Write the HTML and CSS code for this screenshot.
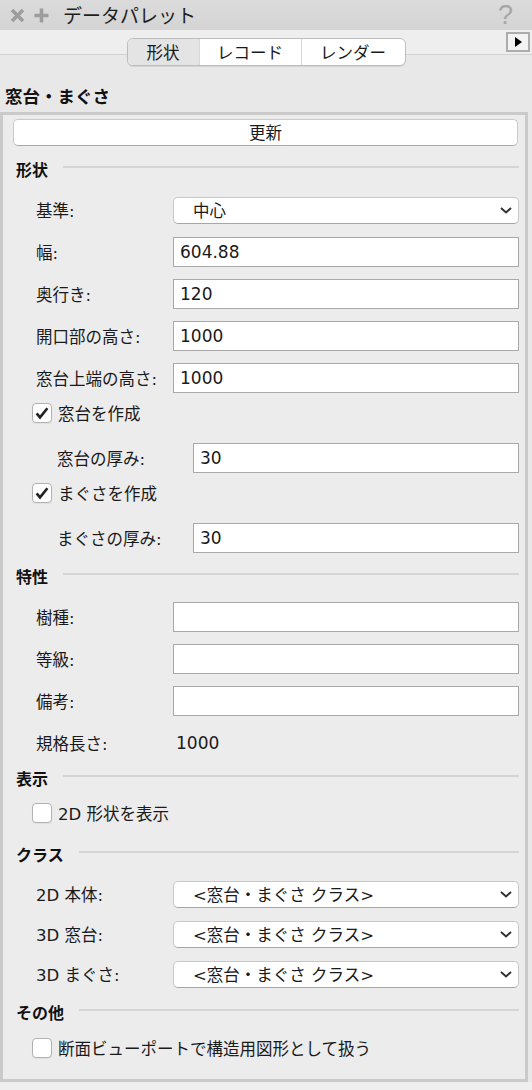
FILE: index.html
```html
<!DOCTYPE html>
<html lang="ja">
<head>
<meta charset="utf-8">
<title>データパレット</title>
<link rel="stylesheet" href="styles.css">
</head>
<body>
<div class="titlebar">
  <svg class="tb-icon" width="15" height="15" viewBox="0 0 15 15"><path d="M2 2L13 13M13 2L2 13"/></svg>
  <svg class="tb-icon tb-plus" width="15" height="15" viewBox="0 0 15 15"><path d="M7.5 0.5V14.5M0.5 7.5H14.5"/></svg>
  <span class="title">データパレット</span>
  <span class="help">?</span>
</div>

<div class="tabstrip">
  <div class="seg">
    <span class="seg-item active w1">形状</span>
    <span class="seg-item w2">レコード</span>
    <span class="seg-item w3">レンダー</span>
  </div>
  <div class="menu-btn"><svg width="7" height="10" viewBox="0 0 7 10"><path d="M0 0L7 5L0 10Z"/></svg></div>
</div>

<div class="main">
  <div class="objname">窓台・まぐさ</div>
  <div class="panel">
    <div class="update">更新</div>

    <div class="hdr first"><span>形状</span><i></i></div>
    <div class="row"><span class="lbl">基準:</span><div class="select"><span>中心</span><svg class="chev" width="12" height="7" viewBox="0 0 12 7"><path d="M1 1L6 5.5L11 1"/></svg></div></div>
    <div class="row"><span class="lbl">幅:</span><input class="field" type="text" value="604.88" readonly></div>
    <div class="row"><span class="lbl">奥行き:</span><input class="field" type="text" value="120" readonly></div>
    <div class="row"><span class="lbl">開口部の高さ:</span><input class="field" type="text" value="1000" readonly></div>
    <div class="row"><span class="lbl">窓台上端の高さ:</span><input class="field" type="text" value="1000" readonly></div>
    <div class="cb"><span class="box"><svg width="18" height="18" viewBox="0 0 18 18"><path d="M3.6 9.4L7 13.4L14.4 4.2"/></svg></span><span>窓台を作成</span></div>
    <div class="row ind gap"><span class="lbl">窓台の厚み:</span><input class="field" type="text" value="30" readonly></div>
    <div class="cb"><span class="box"><svg width="18" height="18" viewBox="0 0 18 18"><path d="M3.6 9.4L7 13.4L14.4 4.2"/></svg></span><span>まぐさを作成</span></div>
    <div class="row ind gap"><span class="lbl">まぐさの厚み:</span><input class="field" type="text" value="30" readonly></div>

    <div class="hdr sec2"><span>特性</span><i></i></div>
    <div class="row"><span class="lbl">樹種:</span><input class="field" type="text" value="" readonly></div>
    <div class="row"><span class="lbl">等級:</span><input class="field" type="text" value="" readonly></div>
    <div class="row"><span class="lbl">備考:</span><input class="field" type="text" value="" readonly></div>
    <div class="row"><span class="lbl">規格長さ:</span><span class="value">1000</span></div>

    <div class="hdr sec3"><span>表示</span><i></i></div>
    <div class="cb cb3"><span class="box"></span><span>2D 形状を表示</span></div>

    <div class="hdr sec4"><span>クラス</span><i></i></div>
    <div class="row short"><span class="lbl">2D 本体:</span><div class="select"><span>&lt;窓台・まぐさ クラス&gt;</span><svg class="chev" width="12" height="7" viewBox="0 0 12 7"><path d="M1 1L6 5.5L11 1"/></svg></div></div>
    <div class="row short"><span class="lbl">3D 窓台:</span><div class="select"><span>&lt;窓台・まぐさ クラス&gt;</span><svg class="chev" width="12" height="7" viewBox="0 0 12 7"><path d="M1 1L6 5.5L11 1"/></svg></div></div>
    <div class="row short"><span class="lbl">3D まぐさ:</span><div class="select"><span>&lt;窓台・まぐさ クラス&gt;</span><svg class="chev" width="12" height="7" viewBox="0 0 12 7"><path d="M1 1L6 5.5L11 1"/></svg></div></div>

    <div class="hdr sec5"><span>その他</span><i></i></div>
    <div class="cb cb4"><span class="box"></span><span>断面ビューポートで構造用図形として扱う</span></div>
  </div>
</div>
</body>
</html>
```

FILE: styles.css
```css
* { box-sizing: border-box; }

html, body { margin: 0; padding: 0; }

body {
  width: 532px;
  height: 1090px;
  overflow: hidden;
  background: #efefef;
  font-family: "DejaVu Sans", "Noto Sans CJK JP", sans-serif;
  font-size: 16.5px;
  color: #1a1a1a;
}

/* title bar */
.titlebar {
  height: 30px;
  display: flex;
  align-items: center;
  padding-left: 10px;
  background: linear-gradient(#dbdbdb, #d4d4d4);
}
.tb-icon { fill: none; stroke: #9d9d9d; stroke-width: 3.6; }
.tb-plus { margin-left: 9px; }
.title {
  margin-left: 14px;
  font-family: "Noto Sans CJK JP", sans-serif;
  font-size: 19px;
  line-height: 30px;
  color: #1e1e1e;
}
.help {
  margin-left: auto;
  margin-right: 19px;
  font-family: "Liberation Sans", sans-serif;
  font-size: 27px;
  line-height: 30px;
  color: #a6a6a6;
}

/* tab strip */
.tabstrip {
  height: 44px;
  display: grid;
  grid-template-columns: 1fr auto 1fr;
  align-items: start;
  background: linear-gradient(#eeeeee 0 24px, #d3d3d3 24px 25px, #e8e8e8 25px);
}
.seg {
  grid-column: 2;
  margin-top: 8px;
  height: 28px;
  display: flex;
  background: #fff;
  border: 1px solid #bdbdbd;
  border-radius: 6px;
  overflow: hidden;
  box-shadow: 0 1px 0 rgba(0, 0, 0, 0.08);
}
.seg-item {
  display: flex;
  align-items: center;
  justify-content: center;
  font-family: "Noto Sans CJK JP", sans-serif;
  font-size: 16.5px;
  color: #1a1a1a;
}
.seg-item + .seg-item { border-left: 1px solid #d8d8d8; }
.seg-item.active { background: #e4e4e4; }
.w1 { width: 71px; }
.w2 { width: 102px; }
.w3 { width: 104px; }

.menu-btn {
  grid-column: 3;
  justify-self: end;
  margin: 2px 2px 0 0;
  width: 24px;
  height: 20px;
  border: 2px solid #acacac;
  background: #f3f3f3;
  display: flex;
  align-items: center;
  justify-content: center;
  padding-left: 1px;
}
.menu-btn svg { fill: #000; }

/* main */
.main { background: #e8e8e8; }

.objname {
  height: 38px;
  padding: 12px 0 0 5px;
  font-family: "Noto Sans CJK JP", sans-serif;
  font-weight: 700;
  font-size: 17.5px;
  line-height: 20px;
  color: #111;
}

.panel {
  margin-right: 4px;
  background: #ececec;
  border: 3px solid #cacaca;
  padding: 4px 6px 17px 10px;
  display: flex;
  flex-direction: column;
}

.update {
  height: 27px;
  margin-right: 1px;
  background: #fff;
  border: 1px solid #cacaca;
  border-bottom-color: #a9a9a9;
  border-radius: 5px;
  text-align: center;
  line-height: 25px;
  font-family: "Noto Sans CJK JP", sans-serif;
  font-size: 16.5px;
}

/* section headers */
.hdr {
  height: 28px;
  display: flex;
  align-items: center;
  padding-left: 3px;
  margin-bottom: 6px;
}
.hdr span {
  font-family: "Noto Sans CJK JP", sans-serif;
  font-weight: 700;
  font-size: 16px;
  color: #111;
}
.hdr i {
  flex: 1;
  height: 2px;
  margin-left: 15px;
  margin-bottom: 4px;
  background: #d5d5d5;
}
.hdr.first { margin-top: 9px; }
.hdr.sec2 { margin-top: 3px; }
.hdr.sec3 { margin-top: 0; }
.hdr.sec4 { margin-top: 13px; }
.hdr.sec5 { margin-top: 4px; }

/* rows */
.row {
  height: 42px;
  display: grid;
  grid-template-columns: 137px 1fr;
  align-items: center;
  padding-left: 23px;
}
.row.ind { padding-left: 44px; grid-template-columns: 136px 1fr; }
.row.gap { margin-top: 10px; }
.row.short { height: 40px; }

.lbl { white-space: nowrap; }

.field {
  height: 30px;
  width: 100%;
  margin: 0;
  background: #fff;
  border: 1px solid #a9a9a9;
  border-radius: 0;
  padding: 0 6px;
  font-family: "DejaVu Sans", "Noto Sans CJK JP", sans-serif;
  font-size: 17px;
  color: #1a1a1a;
  outline: none;
}

.value { padding-left: 3px; font-size: 17px; }

.select {
  height: 27px;
  display: flex;
  align-items: center;
  padding: 0 6px 0 19px;
  background: #fff;
  border: 1px solid #c8c8c8;
  border-bottom-color: #a6a6a6;
  border-radius: 5px;
  white-space: nowrap;
}
.chev {
  margin-left: auto;
  fill: none;
  stroke: #333;
  stroke-width: 2;
}

/* checkboxes */
.cb {
  height: 28px;
  display: flex;
  align-items: center;
  gap: 6px;
  padding-left: 19px;
  white-space: nowrap;
}
.cb.cb3 { margin-top: 1px; }
.cb.cb4 { margin-top: 2px; }
.box {
  width: 20px;
  height: 20px;
  flex: none;
  background: #fff;
  border: 1px solid #b2b2b2;
  border-radius: 4px;
  box-shadow: 0 1px 1px rgba(0, 0, 0, 0.06);
  display: flex;
}
.box svg { fill: none; stroke: #222; stroke-width: 2.6; }
```
